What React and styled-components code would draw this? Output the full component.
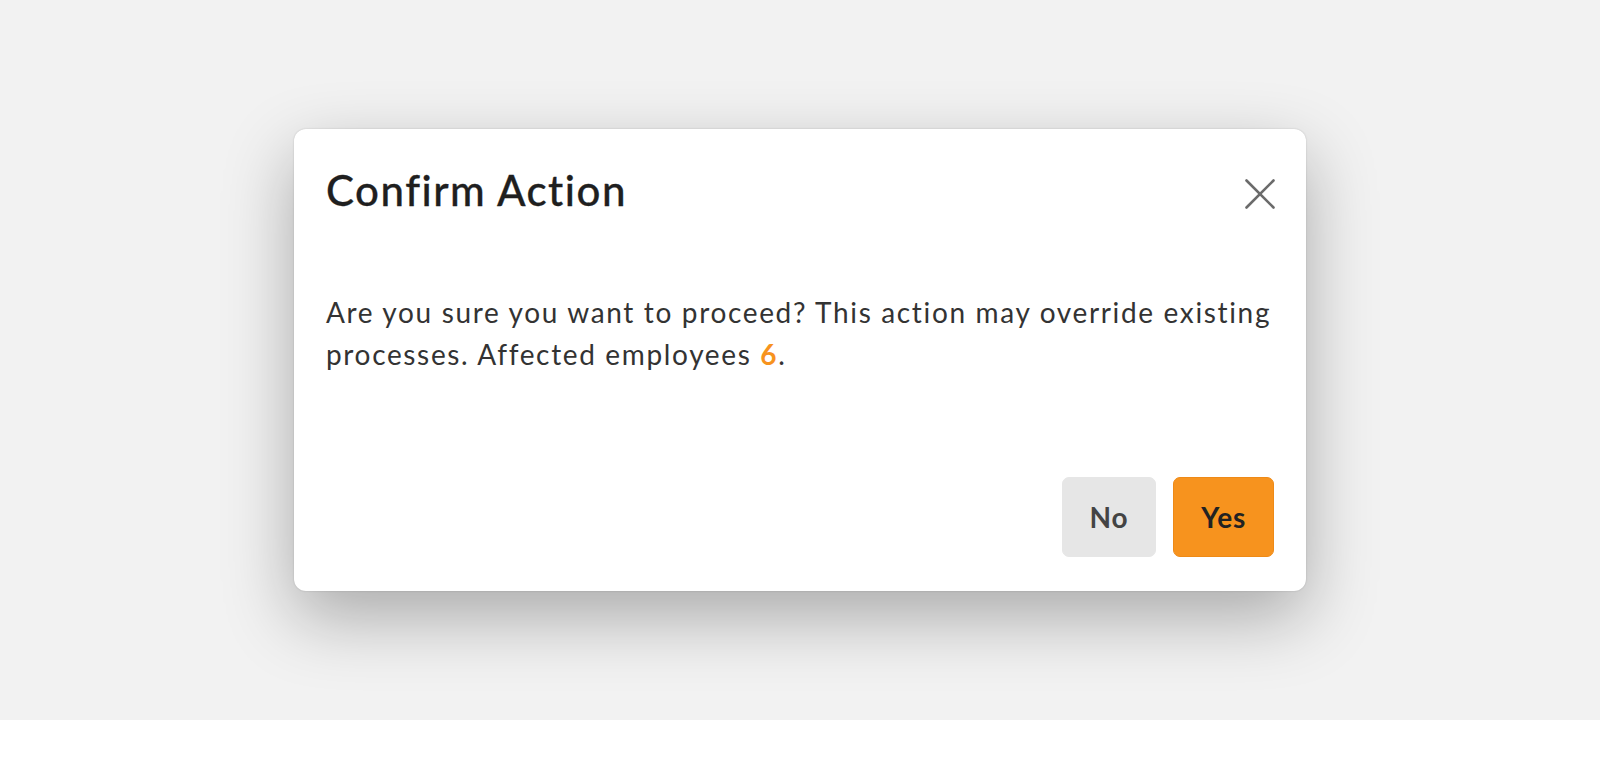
import React from 'react'
import styled, {createGlobalStyle} from 'styled-components'

const GlobalStyle = createGlobalStyle`
  html, body {
    margin: 0;
    padding: 0;
    background: #ffffff;
    font-family: Lato, "Noto Sans", "Liberation Sans", sans-serif;
  }
  * { box-sizing: border-box; }
`

const Backdrop = styled.div`
  height: 720px;
  background: #f2f2f2;
  display: flex;
  align-items: center;
  justify-content: center;
`

const Dialog = styled.div`
  width: 1012px;
  height: 462px;
  background: #ffffff;
  border-radius: 12px;
  padding: 36px 32px 34px 32px;
  display: flex;
  flex-direction: column;
  box-shadow: 0 0 2px rgba(0, 0, 0, 0.18), 0 26px 70px rgba(0, 0, 0, 0.3);
  position: relative;
  z-index: 1;
`

const Header = styled.div`
  display: flex;
  align-items: center;
  justify-content: space-between;
  height: 50px;
`

const Title = styled.h2`
  margin: 0;
  font-size: 42px;
  line-height: 50px;
  font-weight: 500;
  color: #1f1f1f;
  letter-spacing: 1.5px;
  -webkit-text-stroke: 0.3px #1f1f1f;
`

const CloseButton = styled.button`
  border: none;
  background: none;
  padding: 0;
  width: 30px;
  height: 30px;
  margin-top: 8px;
  margin-right: -1px;
  cursor: pointer;
  color: #6b6b6b;
  display: flex;
`

const Message = styled.p`
  margin: 76px -16px 0 0;
  font-size: 28px;
  line-height: 42px;
  letter-spacing: 1.65px;
  color: #333333;
`

const Count = styled.span`
  color: #f7931e;
  font-weight: 700;
`

const Actions = styled.div`
  margin-top: auto;
  display: flex;
  justify-content: flex-end;
  gap: 17px;
  margin-right: 0;
`

const ActionButton = styled.button`
  height: 80px;
  padding: 0 ${({primary}) => (primary ? '27px' : '27px')};
  border-radius: 7px;
  font-family: inherit;
  font-size: 28px;
  font-weight: 700;
  letter-spacing: 0.8px;
  cursor: pointer;
  background: ${({primary}) => (primary ? '#f7931e' : '#e6e6e6')};
  border: 1px solid ${({primary}) => (primary ? '#ee8a17' : '#e6e6e6')};
  color: ${({primary}) => (primary ? '#222222' : '#444444')};
`

function CloseIcon() {
  return (
    <svg width="30" height="30" viewBox="0 0 30 30" fill="none">
      <path d="M1.5 1.5L28.5 28.5M28.5 1.5L1.5 28.5" stroke="currentColor" strokeWidth="2.6" strokeLinecap="round" />
    </svg>
  )
}

export default function App() {
  return (
    <>
      <GlobalStyle />
      <Backdrop>
        <Dialog role="dialog">
          <Header>
            <Title>Confirm Action</Title>
            <CloseButton aria-label="Close"><CloseIcon /></CloseButton>
          </Header>
          <Message>
            Are you sure you want to proceed? This action may override existing processes. Affected employees <Count>6</Count>.
          </Message>
          <Actions>
            <ActionButton>No</ActionButton>
            <ActionButton primary>Yes</ActionButton>
          </Actions>
        </Dialog>
      </Backdrop>
    </>
  )
}
